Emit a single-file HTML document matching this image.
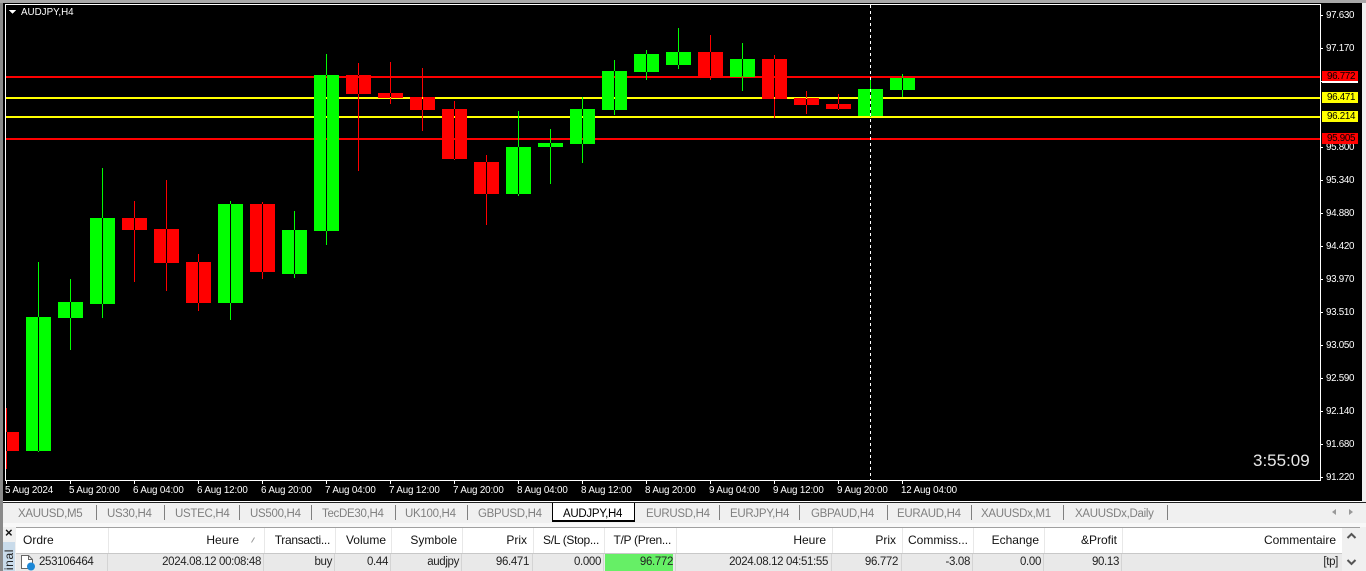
<!DOCTYPE html>
<html><head><meta charset="utf-8"><style>
html,body{margin:0;padding:0;width:1366px;height:571px;overflow:hidden;background:#f0f0f0}
body{position:relative;font-family:"Liberation Sans",sans-serif}
div,span{position:absolute;white-space:nowrap}
.p{left:1326px;color:#fff;font-size:9.8px;letter-spacing:-.3px;line-height:11px;height:11px}
.t{color:#fff;font-size:9.8px;letter-spacing:-.15px;line-height:11px;top:485px}
.k{background:#fff;width:1px;height:3px;top:481px}
.l{left:1322px;width:36px;height:11px;color:#000;font-size:9.8px;letter-spacing:-.3px;line-height:11px;text-indent:5px}
.tab{top:507px;font-size:11.5px;letter-spacing:-.3px;line-height:14px;color:#808080}
.s{top:505px;width:1px;height:15px;background:#808080}
.h{top:533px;font-size:12px;line-height:14px;color:#111}
.n{letter-spacing:-.3px}
.r{top:555px;font-size:11.5px;letter-spacing:-.35px;line-height:14px;color:#222}
.c{top:528px;width:1px;height:25px;background:#e8e8e8}
.d{top:554px;width:1px;height:17px;background:#d4d4d4}
</style></head><body>
<div style="left:0;top:0;width:1366px;height:3px;background:#a8a8a8"></div>
<div style="left:0;top:3px;width:3px;height:568px;background:#8a8a8a"></div>
<div style="left:3px;top:3px;width:1359px;height:498px;background:#000"></div>
<div style="left:1362px;top:3px;width:4px;height:498px;background:#f0f0f0"></div>
<svg width="1366" height="571" style="position:absolute;left:0;top:0" shape-rendering="crispEdges">
<path d="M5 4H1321V5H6V480H1321V481H5z" fill="#fff"/>
<rect x="1320" y="4" width="1" height="477" fill="#fff"/>
<rect x="6" y="76" width="1314" height="2" fill="#f00"/>
<rect x="6" y="97" width="1314" height="2" fill="#ff0"/>
<rect x="6" y="116" width="1314" height="2" fill="#ff0"/>
<rect x="6" y="138" width="1314" height="2" fill="#f00"/>
<line x1="870.5" y1="5" x2="870.5" y2="480" stroke="#fff" stroke-width="1" stroke-dasharray="3 3"/>
<path fill="#0f0" d="M38 262V452h1V262z M26 317h25V451h-25z
M70 279V350h1V279z M58 302h25V318h-25z
M102 168V318h1V168z M90 218h25V304h-25z
M230 201V320h1V201z M218 204h25V303h-25z
M294 211V278h1V211z M282 230h25V274h-25z
M326 54V245h1V54z M314 75h25V231h-25z
M518 111V196h1V111z M506 147h25V194h-25z
M550 129V184h1V129z M538 143h25V147h-25z
M582 97V163h1V97z M570 109h25V144h-25z
M614 60V115h1V60z M602 71h25V110h-25z
M646 50V80h1V50z M634 54h25V72h-25z
M678 28V69h1V28z M666 52h25V65h-25z
M742 43V91h1V43z M730 59h25V77h-25z
M870 80V117h1V80z M858 89h25V116h-25z
M902 74V97h1V74z M890 78h25V90h-25z"/>
<path fill="#f00" d="M6 408V469h1V408z M6 432h13V451h-13z
M134 201V282h1V201z M122 218h25V230h-25z
M166 180V291h1V180z M154 229h25V263h-25z
M198 254V311h1V254z M186 262h25V303h-25z
M262 202V279h1V202z M250 204h25V272h-25z
M358 63V171h1V63z M346 75h25V94h-25z
M390 62V104h1V62z M378 93h25V98h-25z
M422 68V131h1V68z M410 97h25V110h-25z
M454 101V160h1V101z M442 109h25V159h-25z
M486 155V225h1V155z M474 162h25V194h-25z
M710 35V80h1V35z M698 52h25V77h-25z
M774 55V118h1V55z M762 59h25V99h-25z
M806 91V114h1V91z M794 98h25V105h-25z
M838 94V110h1V94z M826 104h25V109h-25z"/>
<path fill="#fff" d="M9 10h7l-3.5 4z"/>
<path fill="#fff" d="M1320 15h3v1h-3zM1320 48h3v1h-3zM1320 81h3v1h-3zM1320 147h3v1h-3zM1320 180h3v1h-3zM1320 213h3v1h-3zM1320 246h3v1h-3zM1320 279h3v1h-3zM1320 312h3v1h-3zM1320 345h3v1h-3zM1320 378h3v1h-3zM1320 411h3v1h-3zM1320 444h3v1h-3zM1320 477h3v1h-3z"/>
</svg>
<div style="left:21px;top:7px;color:#fff;font-size:9.8px;line-height:11px">AUDJPY,H4</div>
<div class="p" style="top:10px">97.630</div>
<div class="p" style="top:43px">97.170</div>
<div style="left:1322px;top:81px;width:36px;height:2px;background:#fff"></div>
<div class="p" style="top:142px">95.800</div>
<div class="p" style="top:175px">95.340</div>
<div class="p" style="top:208px">94.880</div>
<div class="p" style="top:241px">94.420</div>
<div class="p" style="top:274px">93.970</div>
<div class="p" style="top:307px">93.510</div>
<div class="p" style="top:340px">93.050</div>
<div class="p" style="top:373px">92.590</div>
<div class="p" style="top:406px">92.140</div>
<div class="p" style="top:439px">91.680</div>
<div class="p" style="top:472px">91.220</div>
<div class="l" style="top:71px;height:10px;background:#f00">96.772</div>
<div class="l" style="top:92px;background:#ff0">96.471</div>
<div class="l" style="top:111px;background:#ff0">96.214</div>
<div class="l" style="top:133px;background:#f00">95.905</div>
<div style="left:1253px;top:451px;color:#e8e8e8;font-size:17px;line-height:20px">3:55:09</div>
<div class="k" style="left:6px"></div><div class="k" style="left:70px"></div><div class="k" style="left:134px"></div><div class="k" style="left:198px"></div><div class="k" style="left:262px"></div><div class="k" style="left:326px"></div><div class="k" style="left:390px"></div><div class="k" style="left:454px"></div><div class="k" style="left:518px"></div><div class="k" style="left:582px"></div><div class="k" style="left:646px"></div><div class="k" style="left:710px"></div><div class="k" style="left:774px"></div><div class="k" style="left:838px"></div><div class="k" style="left:902px"></div>
<div class="t" style="left:5px">5 Aug 2024</div>
<div class="t" style="left:69px">5 Aug 20:00</div>
<div class="t" style="left:133px">6 Aug 04:00</div>
<div class="t" style="left:197px">6 Aug 12:00</div>
<div class="t" style="left:261px">6 Aug 20:00</div>
<div class="t" style="left:325px">7 Aug 04:00</div>
<div class="t" style="left:389px">7 Aug 12:00</div>
<div class="t" style="left:453px">7 Aug 20:00</div>
<div class="t" style="left:517px">8 Aug 04:00</div>
<div class="t" style="left:581px">8 Aug 12:00</div>
<div class="t" style="left:645px">8 Aug 20:00</div>
<div class="t" style="left:709px">9 Aug 04:00</div>
<div class="t" style="left:773px">9 Aug 12:00</div>
<div class="t" style="left:837px">9 Aug 20:00</div>
<div class="t" style="left:901px">12 Aug 04:00</div>

<div style="left:3px;top:501px;width:1359px;height:1px;background:#fff"></div>
<div style="left:3px;top:502px;width:1363px;height:1px;background:#222"></div>
<div style="left:3px;top:523px;width:1363px;height:4px;background:#f8f8f8"></div>

<div class="tab" style="left:18px">XAUUSD,M5</div><div class="s" style="left:96px"></div>
<div class="tab" style="left:107px">US30,H4</div><div class="s" style="left:164px"></div>
<div class="tab" style="left:175px">USTEC,H4</div><div class="s" style="left:239px"></div>
<div class="tab" style="left:250px">US500,H4</div><div class="s" style="left:311px"></div>
<div class="tab" style="left:322px">TecDE30,H4</div><div class="s" style="left:395px"></div>
<div class="tab" style="left:405px">UK100,H4</div><div class="s" style="left:467px"></div>
<div class="tab" style="left:478px">GBPUSD,H4</div>
<div style="left:552px;top:503px;width:81px;height:17px;background:#fff;border:solid #000;border-width:0 1px 2px 1px"></div>
<div class="tab" style="left:563px;color:#000">AUDJPY,H4</div>
<div class="tab" style="left:646px">EURUSD,H4</div><div class="s" style="left:719px"></div>
<div class="tab" style="left:730px">EURJPY,H4</div><div class="s" style="left:799px"></div>
<div class="tab" style="left:811px">GBPAUD,H4</div><div class="s" style="left:887px"></div>
<div class="tab" style="left:897px">EURAUD,H4</div><div class="s" style="left:971px"></div>
<div class="tab" style="left:981px">XAUUSDx,M1</div><div class="s" style="left:1063px"></div>
<div class="tab" style="left:1075px">XAUUSDx,Daily</div><div class="s" style="left:1167px"></div>
<svg width="40" height="12" style="position:absolute;left:1326px;top:506px"><path d="M10 3v6l-4-3z" fill="#999"/><path d="M23 3v6l4-3z" fill="#999"/></svg>

<div style="left:3px;top:527px;width:13px;height:44px;background:#f0f0f0"></div>
<div style="left:5px;top:526px;color:#111;font-size:13px;line-height:14px;font-weight:bold">×</div>
<div style="left:3px;top:542px;width:12px;height:29px;background:#c9dbea"></div>
<span style="left:-2px;top:553px;width:22px;height:14px;font-size:12px;letter-spacing:.6px;line-height:14px;color:#222;transform:rotate(-90deg);text-align:right">inal</span>

<div style="left:16px;top:527px;width:1344px;height:1px;background:#a0a0a0"></div>
<div style="left:16px;top:528px;width:1326px;height:25px;background:#fff"></div>
<div style="left:16px;top:553px;width:1326px;height:1px;background:#c8c8c8"></div>
<div style="left:16px;top:554px;width:1326px;height:17px;background:#e9e9e9"></div>
<div style="left:1342px;top:528px;width:18px;height:43px;background:#f0f0f0"></div>
<div style="left:605px;top:554px;width:68px;height:17px;background:#66ef66"></div>

<div class="c" style="left:108px"></div><div class="c" style="left:264px"></div><div class="c" style="left:335px"></div><div class="c" style="left:391px"></div><div class="c" style="left:462px"></div><div class="c" style="left:533px"></div><div class="c" style="left:604px"></div><div class="c" style="left:676px"></div><div class="c" style="left:832px"></div><div class="c" style="left:902px"></div><div class="c" style="left:973px"></div><div class="c" style="left:1044px"></div><div class="c" style="left:1122px"></div>
<div class="d" style="left:107px"></div><div class="d" style="left:263px"></div><div class="d" style="left:334px"></div><div class="d" style="left:390px"></div><div class="d" style="left:461px"></div><div class="d" style="left:532px"></div><div class="d" style="left:603px"></div><div class="d" style="left:675px"></div><div class="d" style="left:831px"></div><div class="d" style="left:901px"></div><div class="d" style="left:972px"></div><div class="d" style="left:1043px"></div><div class="d" style="left:1121px"></div>

<div class="h" style="left:23px">Ordre</div>
<div class="h" style="right:1127px">Heure</div>
<svg width="6" height="8" style="position:absolute;left:250px;top:536px"><path d="M4.5 1.5L1.5 6.5" stroke="#999" stroke-width="1" fill="none"/></svg>
<div class="h n" style="right:1036px">Transacti...</div>
<div class="h" style="right:980px">Volume</div>
<div class="h" style="right:909px">Symbole</div>
<div class="h" style="right:839px">Prix</div>
<div class="h n" style="right:767px">S/L (Stop...</div>
<div class="h n" style="right:695px">T/P (Pren...</div>
<div class="h" style="right:540px">Heure</div>
<div class="h" style="right:470px">Prix</div>
<div class="h" style="right:398px">Commiss...</div>
<div class="h" style="right:327px">Echange</div>
<div class="h" style="right:249px">&amp;Profit</div>
<div class="h" style="right:30px">Commentaire</div>

<svg width="16" height="17" style="position:absolute;left:20px;top:554px"><path d="M1.5 1.5H8.5L12.5 5.5V14.5H1.5z" fill="#fff" stroke="#666" stroke-width="1"/><path d="M8.5 1.5V5.5H12.5" fill="none" stroke="#666"/><circle cx="11" cy="12.5" r="4" fill="#1b87d6"/></svg>
<div class="r" style="left:39px">253106464</div>
<div class="r" style="right:1105px">2024.08.12 00:08:48</div>
<div class="r" style="right:1034px">buy</div>
<div class="r" style="right:978px">0.44</div>
<div class="r" style="right:907px">audjpy</div>
<div class="r" style="right:837px">96.471</div>
<div class="r" style="right:765px">0.000</div>
<div class="r" style="right:693px">96.772</div>
<div class="r" style="right:538px">2024.08.12 04:51:55</div>
<div class="r" style="right:468px">96.772</div>
<div class="r" style="right:396px">-3.08</div>
<div class="r" style="right:325px">0.00</div>
<div class="r" style="right:247px">90.13</div>
<div class="r" style="right:28px">[tp]</div>
<svg width="18" height="43" style="position:absolute;left:1342px;top:528px"><path d="M5.5 10L9.5 6L13.5 10" fill="none" stroke="#555" stroke-width="2"/><path d="M5.5 32L9.5 36L13.5 32" fill="none" stroke="#555" stroke-width="2"/></svg>
</body></html>
